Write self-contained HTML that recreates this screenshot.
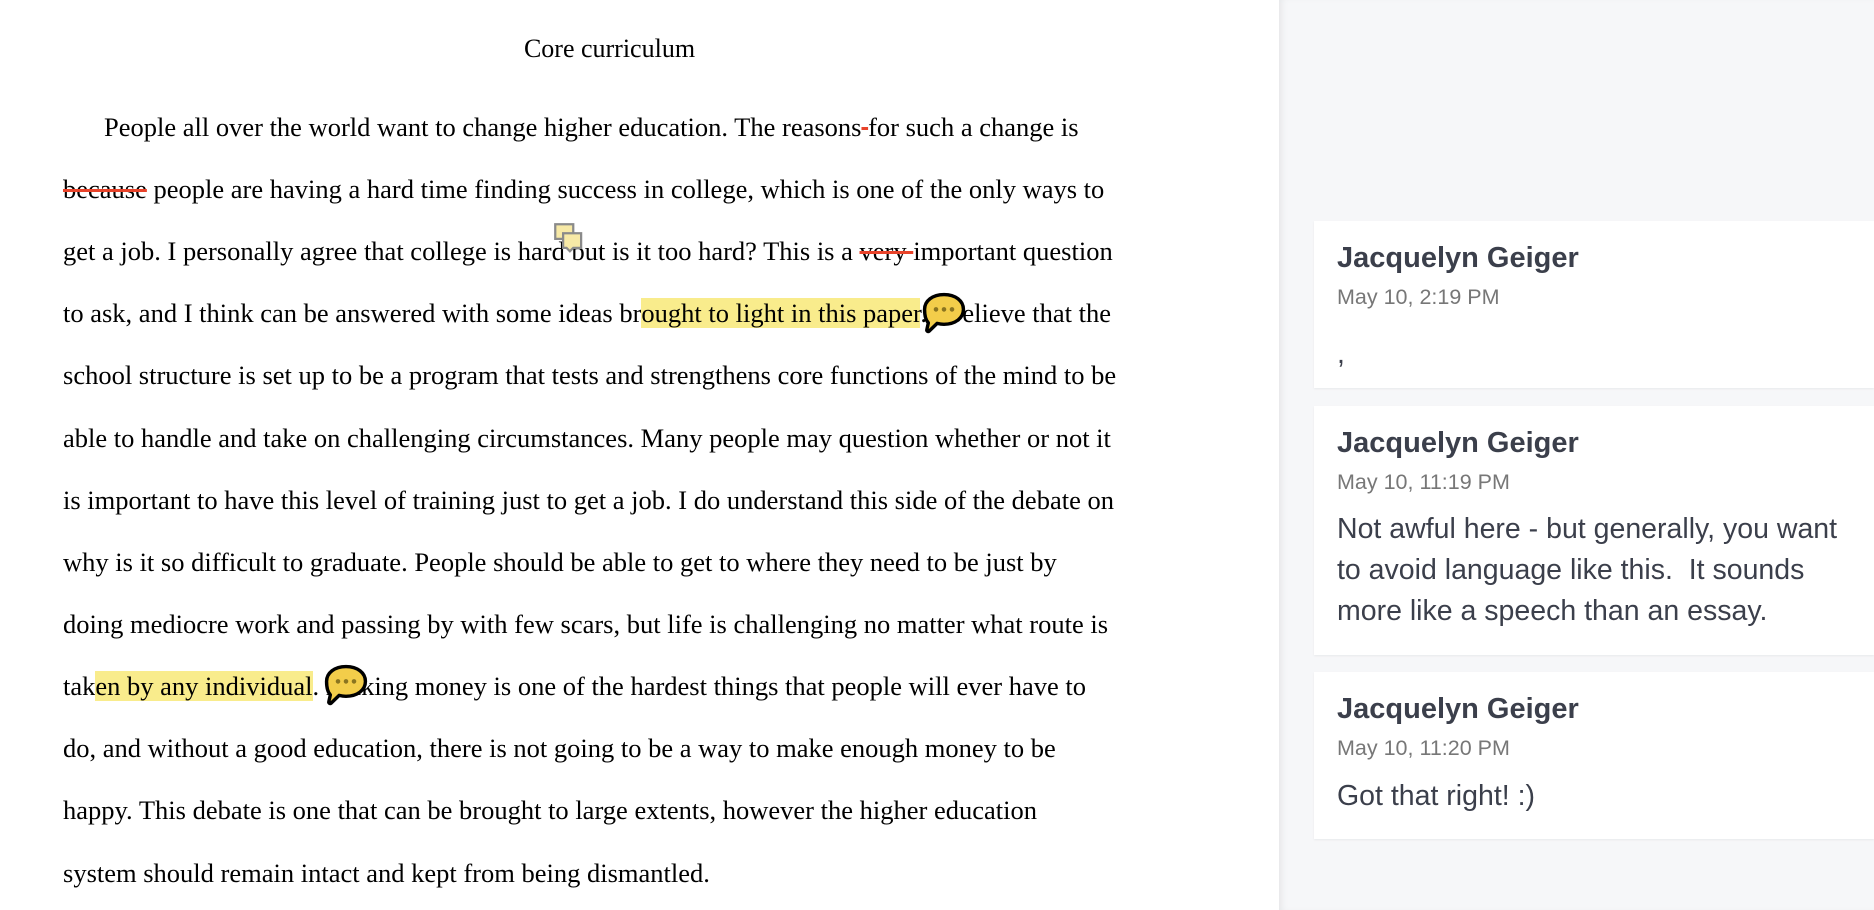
<!DOCTYPE html>
<html><head><meta charset="utf-8"><style>
body{margin:0;width:1874px;height:910px;overflow:hidden;background:#fff;position:relative;font-family:"Liberation Serif",serif;}
.l{position:absolute;left:63px;height:30px;line-height:30px;font-size:26.5px;color:#000;text-align:justify;text-align-last:justify;white-space:nowrap;}
.hl{background:#f9ec8c;}
.st{text-decoration:line-through;text-decoration-color:#e8432a;text-decoration-thickness:3px;}
#right{position:absolute;left:1279px;top:0;width:595px;height:910px;background:#f6f7f9;box-shadow:inset 6px 0 8px -4px rgba(0,0,0,0.08);}
.card{position:absolute;left:35px;right:0;background:#fff;box-shadow:0 1px 2px rgba(0,0,0,0.06);font-family:"Liberation Sans",sans-serif;}
.n{position:absolute;left:23px;font-weight:bold;font-size:29px;color:#3b3f4b;}
.d{position:absolute;left:23px;font-size:21.5px;color:#777;}
.t{position:absolute;left:23px;font-size:28.5px;line-height:41px;color:#3b3f4b;white-space:nowrap;}
</style></head><body>
<div style="position:absolute;left:0;width:1219px;top:34px;text-align:center;font-size:26px;">Core curriculum</div>

<div class="l" style="left:104px;width:973px;top:112px">People all over the world want to change higher education. The reasons<span class="st"> </span>for such a change is</div>
<div class="l" style="width:1039px;top:174px"><span class="st">because</span> people are having a hard time finding success in college, which is one of the only ways to</div>
<div class="l" style="width:1046px;top:236px">get a job. I personally agree that college is hard but is it too hard? This is a <span class="st">very </span>important question</div>
<div class="l" style="width:1046px;top:298px">to ask, and I think can be answered with some ideas br<span class="hl">ought to light in this paper</span>. I believe that the</div>
<div class="l" style="width:1051px;top:360px">school structure is set up to be a program that tests and strengthens core functions of the mind to be</div>
<div class="l" style="width:1046px;top:423px">able to handle and take on challenging circumstances. Many people may question whether or not it</div>
<div class="l" style="width:1048px;top:485px">is important to have this level of training just to get a job. I do understand this side of the debate on</div>
<div class="l" style="width:991px;top:547px">why is it so difficult to graduate. People should be able to get to where they need to be just by</div>
<div class="l" style="width:1042px;top:609px">doing mediocre work and passing by with few scars, but life is challenging no matter what route is</div>
<div class="l" style="width:1021px;top:671px">tak<span class="hl">en by any individual</span>. Making money is one of the hardest things that people will ever have to</div>
<div class="l" style="width:991px;top:733px">do, and without a good education, there is not going to be a way to make enough money to be</div>
<div class="l" style="width:974px;top:795px">happy. This debate is one that can be brought to large extents, however the higher education</div>
<div class="l" style="text-align-last:left;top:858px">system should remain intact and kept from being dismantled.</div>

<svg style="position:absolute;left:553px;top:222px" width="36" height="36" viewBox="0 0 32 32">
<rect x="2" y="2" width="16" height="13" fill="#f7e9a6" stroke="#8a8a8a" stroke-width="2"/>
<path d="M9 10h16v13h-7l-3 3-3-3H9z" fill="#f7e9a6" stroke="#8a8a8a" stroke-width="2"/>
</svg>

<svg style="position:absolute;left:920px;top:290px" width="48" height="48" viewBox="0 0 42 42">
<path d="M21 4c10 0 17 5.5 17 13s-7 13-17 13c-2 0-4-.3-6-.8L8 36c-1 .8-2.3 0-2-1.3l1.3-6C4.6 26 4 22 4 17 4 9.5 11 4 21 4z" fill="#f3cd4a" stroke="#000" stroke-width="3" stroke-linejoin="round"/>
<circle cx="14" cy="17" r="2" fill="#8a7420"/><circle cx="21" cy="17" r="2" fill="#8a7420"/><circle cx="28" cy="17" r="2" fill="#8a7420"/>
</svg>
<svg style="position:absolute;left:322px;top:662px" width="48" height="48" viewBox="0 0 42 42">
<path d="M21 4c10 0 17 5.5 17 13s-7 13-17 13c-2 0-4-.3-6-.8L8 36c-1 .8-2.3 0-2-1.3l1.3-6C4.6 26 4 22 4 17 4 9.5 11 4 21 4z" fill="#f3cd4a" stroke="#000" stroke-width="3" stroke-linejoin="round"/>
<circle cx="14" cy="17" r="2" fill="#8a7420"/><circle cx="21" cy="17" r="2" fill="#8a7420"/><circle cx="28" cy="17" r="2" fill="#8a7420"/>
</svg>

<div id="right">
<div class="card" style="top:221px;height:167px">
<div class="n" style="top:21px">Jacquelyn Geiger</div>
<div class="d" style="top:64px">May 10, 2:19 PM</div>
<div class="t" style="top:113px">,</div>
</div>
<div class="card" style="top:406px;height:249px">
<div class="n" style="top:21px">Jacquelyn Geiger</div>
<div class="d" style="top:64px">May 10, 11:19 PM</div>
<div class="t" style="top:103px">Not awful here - but generally, you want<br>to avoid language like this.&nbsp; It sounds<br>more like a speech than an essay.</div>
</div>
<div class="card" style="top:672px;height:167px">
<div class="n" style="top:21px">Jacquelyn Geiger</div>
<div class="d" style="top:64px">May 10, 11:20 PM</div>
<div class="t" style="top:104px">Got that right! :)</div>
</div>
</div>
</body></html>
